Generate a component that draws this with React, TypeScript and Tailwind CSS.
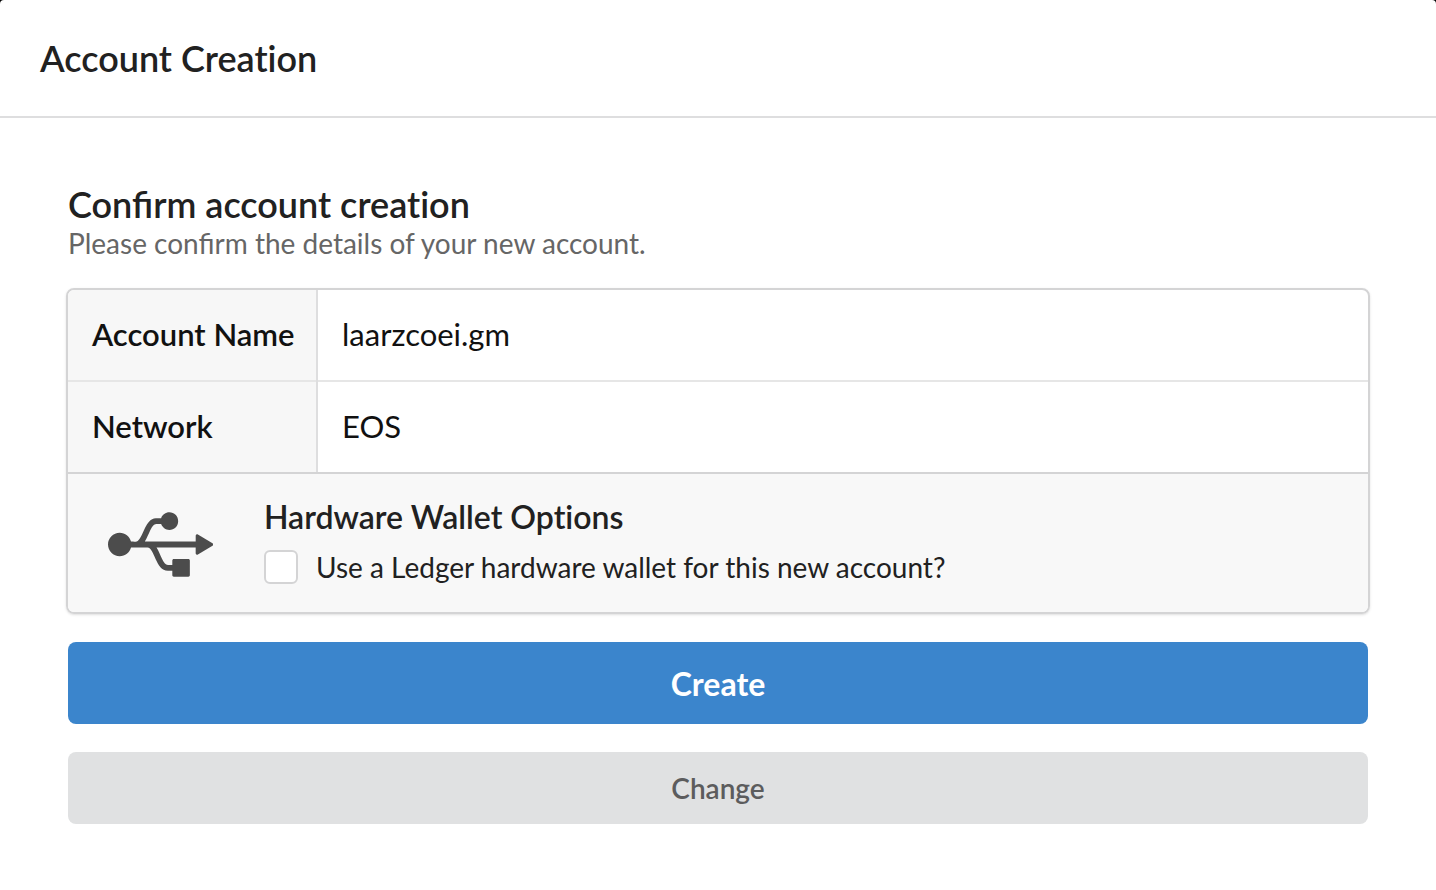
import { FaUsb } from "react-icons/fa";

interface DetailRowProps {
	label: string;
	value: string;
	divided?: boolean;
}

const DetailRow = ({ label, value, divided }: DetailRowProps) => {
	const border = divided ? "border-t-2 border-[#e6e6e6]" : "";

	return (
		<tr className={border}>
			<th
				scope="row"
				className="w-[249px] pl-6 pr-5 pt-[23px] pb-[25px] text-left font-semibold whitespace-nowrap bg-[#f7f7f7] border-r-2 border-[#dededf]"
			>
				{label}
			</th>
			<td className="px-6 pt-[23px] pb-[25px]">{value}</td>
		</tr>
	);
};

const HardwareWalletOptions = () => (
	<section className="flex h-[140px] bg-[#f8f8f8] border-t-2 border-[#d4d4d5]">
		<div className="w-[196px] pl-10 pt-7">
			<FaUsb className="w-[105px] h-[85px] text-[#4c4c4c]" />
		</div>
		<div className="pt-6">
			<h2 className="text-[32px] leading-[38px] font-semibold">Hardware Wallet Options</h2>
			<label className="flex items-center gap-[18px] mt-3 text-[28px] leading-[38px]">
				<input
					type="checkbox"
					className="appearance-none w-[34px] h-[34px] rounded-md bg-white border-2 border-[#d4d4d5] checked:bg-[#3b85cc]"
				/>
				Use a Ledger hardware wallet for this new account?
			</label>
		</div>
	</section>
);

export default function App() {
	return (
		<div className="bg-black">
			<div className="min-h-screen rounded-t bg-white font-['Lato',sans-serif] text-[#212121]">
				<header className="px-10 py-9 border-b-2 border-[#dededf]">
					<h1 className="text-[36px] leading-11 font-semibold [font-variant-ligatures:none]">
						Account Creation
					</h1>
				</header>
				<main className="px-[68px] pt-16">
					<h2 className="text-[36px] leading-11 font-semibold">
						Confirm <span className="[font-variant-ligatures:none]">account creation</span>
					</h2>
					<p className="text-[28px] leading-[34px] text-[#666666]">
						Please confirm the details of your new account.
					</p>
					<div className="-mx-0.5 mt-7 rounded-lg border-2 border-[#d4d4d5] overflow-hidden shadow-sm [font-variant-ligatures:none]">
						<table className="w-full text-[31px] leading-[42px] text-[#111111]">
							<tbody>
								<DetailRow label="Account Name" value="laarzcoei.gm" />
								<DetailRow label="Network" value="EOS" divided />
							</tbody>
						</table>
						<HardwareWalletOptions />
					</div>
					<button
						type="button"
						className="block w-full h-[82px] pt-0.5 mt-7 rounded-lg bg-[#3b85cc] text-white text-[32px] font-bold"
					>
						Create
					</button>
					<button
						type="button"
						className="block w-full h-[72px] mt-7 rounded-lg bg-[#e0e1e2] text-[#5c5c5d] text-[28px] font-semibold"
					>
						Change
					</button>
				</main>
			</div>
		</div>
	);
}
